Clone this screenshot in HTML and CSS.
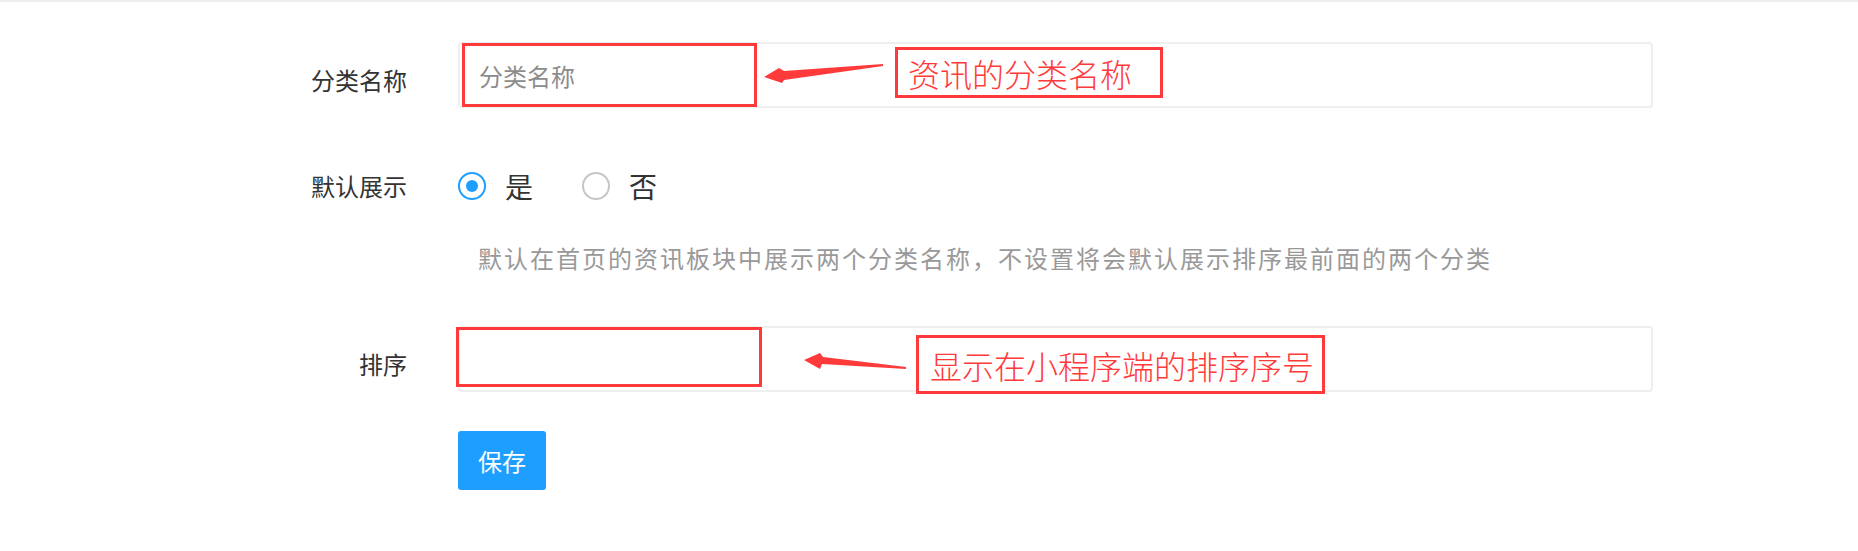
FILE: index.html
```html
<!DOCTYPE html>
<html lang="zh-CN">
<head>
    <meta charset="UTF-8">
    <meta name="viewport" content="width=device-width, initial-scale=1.0">
    <title>资讯分类</title>
    <link rel="stylesheet" href="styles.css">
</head>
<body>
    <div class="topline"></div>
    <form class="form">
        <!-- 分类名称 -->
        <div class="form-item item-name">
            <label class="form-label">分类名称</label>
            <div class="input-block">
                <input class="input" type="text" placeholder="分类名称">
            </div>
            <span class="mark mark-name"></span>
            <svg class="arrow arrow-name" width="130" height="30" viewBox="0 0 130 30">
                <polygon points="4,17 19,8 24,11 123,4 123,6 24,20 22,23" fill="#ff3a3a"/>
            </svg>
            <span class="note note-name">资讯的分类名称</span>
        </div>

        <!-- 默认展示 -->
        <div class="form-item item-show">
            <label class="form-label">默认展示</label>
            <div class="radio-group">
                <label class="radio">
                    <span class="radio-icon checked"></span>
                    <span class="radio-text">是</span>
                </label>
                <label class="radio">
                    <span class="radio-icon"></span>
                    <span class="radio-text">否</span>
                </label>
            </div>
        </div>
        <div class="form-help">默认在首页的资讯板块中展示两个分类名称，不设置将会默认展示排序最前面的两个分类</div>

        <!-- 排序 -->
        <div class="form-item item-sort">
            <label class="form-label">排序</label>
            <div class="input-block">
                <input class="input" type="text">
            </div>
            <span class="mark mark-sort"></span>
            <svg class="arrow arrow-sort" width="110" height="30" viewBox="0 0 110 30">
                <polygon points="4,15 20,8 23,12 106,22 106,24 22,19 20,24" fill="#ff3a3a"/>
            </svg>
            <span class="note note-sort">显示在小程序端的排序序号</span>
        </div>

        <div class="form-actions">
            <button class="btn" type="button">保存</button>
        </div>
    </form>
</body>
</html>
```

FILE: styles.css
```css
body {
    margin: 0;
    padding: 0;
    background-color: #fff;
    font-family: "Noto Sans CJK SC", "Noto Sans", sans-serif;
    color: #333;
}
.topline {
    height: 2px;
    background-color: #eeeeee;
}
.form {
    margin: 0;
    padding-left: 242px;
}
.form-item {
    position: relative;
    display: flex;
    align-items: flex-start;
    margin-left: -242px;
    padding-left: 242px;
}
.item-name {
    margin-top: 40px;
}
.item-show {
    margin-top: 40px;
}
.item-sort {
    margin-top: 50px;
}
.form-label {
    width: 165px;
    margin-right: 51px;
    padding-top: 20px;
    text-align: right;
    font-size: 24px;
    line-height: 36px;
    color: #333;
}
.input-block {
    width: 1195px;
}
.input {
    display: block;
    width: 100%;
    height: 66px;
    box-sizing: border-box;
    padding: 0 19px;
    border: 2px solid #efefef;
    border-radius: 4px;
    font-family: inherit;
    font-size: 24px;
    color: #333;
    outline: none;
    background: #fff;
}
.input::placeholder {
    color: #8c8c8c;
}
.radio-group {
    display: flex;
    align-items: center;
    height: 76px;
}
.radio {
    display: flex;
    align-items: center;
    margin-right: 49px;
}
.radio-icon {
    display: flex;
    align-items: center;
    justify-content: center;
    width: 28px;
    height: 28px;
    box-sizing: border-box;
    border: 2px solid #c6c6c6;
    border-radius: 50%;
}
.radio-icon.checked {
    border-color: #1e9fff;
}
.radio-icon.checked::after {
    content: "";
    width: 12px;
    height: 12px;
    border-radius: 50%;
    background-color: #1e9fff;
}
.radio-text {
    margin-left: 19px;
    font-size: 28px;
    line-height: 36px;
    color: #333;
}
.form-help {
    margin-top: 16px;
    padding-left: 236px;
    font-size: 24px;
    letter-spacing: 2px;
    line-height: 36px;
    color: #999;
}
.form-actions {
    margin-top: 39px;
    padding-left: 216px;
}
.btn {
    width: 88px;
    height: 59px;
    border: none;
    border-radius: 3px;
    background-color: #1e9fff;
    color: #fff;
    font-family: inherit;
    font-size: 24px;
    padding: 0;
}

/* annotations drawn over the form */
.mark {
    position: absolute;
    box-sizing: border-box;
    border: 3px solid #ff3a3a;
}
.mark-name {
    left: 462px;
    top: 1px;
    width: 295px;
    height: 64px;
}
.mark-sort {
    left: 456px;
    top: 1px;
    width: 306px;
    height: 60px;
}
.arrow {
    position: absolute;
}
.arrow-name {
    left: 760px;
    top: 18px;
}
.arrow-sort {
    left: 800px;
    top: 19px;
}
.note {
    position: absolute;
    display: flex;
    align-items: center;
    box-sizing: border-box;
    border: 3px solid #ff3a3a;
    background: #fff;
    color: #ff3a3a;
    font-size: 32px;
    font-weight: 300;
    line-height: 1;
}
.note-name {
    left: 895px;
    top: 5px;
    width: 268px;
    height: 51px;
    padding-left: 10px;
}
.note-sort {
    left: 916px;
    top: 9px;
    width: 409px;
    height: 59px;
    padding-left: 11px;
}
```
